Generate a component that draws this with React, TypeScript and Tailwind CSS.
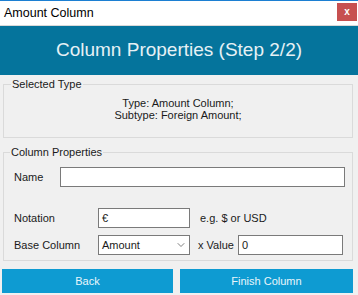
import { ChevronDown } from "lucide-react";

export default function App() {
  return (
    <div className="w-[358px] h-[295px] bg-[#f0f0f0] border-t border-[#1c7fd2] font-['Liberation_Sans',Arial,sans-serif] text-[11px] text-[#1a1a1a] overflow-hidden">
      {/* title bar */}
      <div className="h-[25px] bg-white flex items-center justify-between border-b border-[#d9d9d9]">
        <span className="pl-[4px] text-[12.5px] text-black">Amount Column</span>
        <div className="w-[20px] h-[18px] mr-[1px] mb-[3px] bg-[#c75050] flex items-center justify-center text-white text-[10px] font-bold leading-none">
          x
        </div>
      </div>

      {/* header */}
      <div className="h-[49px] bg-[#05749c] flex items-center justify-center text-[19px] text-[#e6f1f5]">
        Column Properties (Step 2/2)
      </div>

      <div className="px-[3px] pt-px">
        <fieldset className="h-[62px] border border-[#dadada] px-[10px] pt-[5px] w-[350px]">
          <legend className="ml-[-3px] px-[1px] leading-[16px]">Selected Type</legend>
          <div className="text-center leading-[12px]">
            <div>Type: Amount Column;</div>
            <div>Subtype: Foreign Amount;</div>
          </div>
        </fieldset>

        <fieldset className="h-[117px] mt-[6px] border border-[#dadada] pl-[10px] pr-[6px] pt-[7px] w-[350px]">
          <legend className="ml-[-4px] px-[1px] leading-[16px]">Column Properties</legend>

          <div className="flex items-center h-[20px]">
            <span className="w-[46px]">Name</span>
            <div className="w-[285px] h-[20px] bg-white border border-[#7a7a7a]" />
          </div>

          <div className="flex items-center h-[20px] mt-[21px]">
            <span className="w-[84px]">Notation</span>
            <div className="w-[92px] h-[20px] bg-white border border-[#7a7a7a] pl-[3px] leading-[18px]">€</div>
            <span className="ml-[10px]">e.g. $ or USD</span>
          </div>

          <div className="flex items-center h-[20px] mt-[7px]">
            <span className="w-[84px]">Base Column</span>
            <div className="w-[92px] h-[20px] bg-white border border-[#7a7a7a] pl-[3px] flex items-center justify-between">
              <span className="leading-[18px]">Amount</span>
              <ChevronDown className="w-[12px] h-[12px] mr-[2px] text-[#555]" strokeWidth={1.5} />
            </div>
            <span className="ml-[8px] w-[40px] whitespace-nowrap">x Value</span>
            <div className="w-[105px] h-[20px] bg-white border border-[#7a7a7a] pl-[3px] leading-[18px]">0</div>
          </div>
        </fieldset>
      </div>

      <div className="flex gap-[7px] pl-[2px] mt-[8px]">
        <button className="w-[171px] h-[24px] bg-[#0e9bd2] text-[#eaf6fb] text-[11px]">Back</button>
        <button className="w-[173px] h-[24px] bg-[#0e9bd2] text-[#eaf6fb] text-[11px]">Finish Column</button>
      </div>
    </div>
  );
}
